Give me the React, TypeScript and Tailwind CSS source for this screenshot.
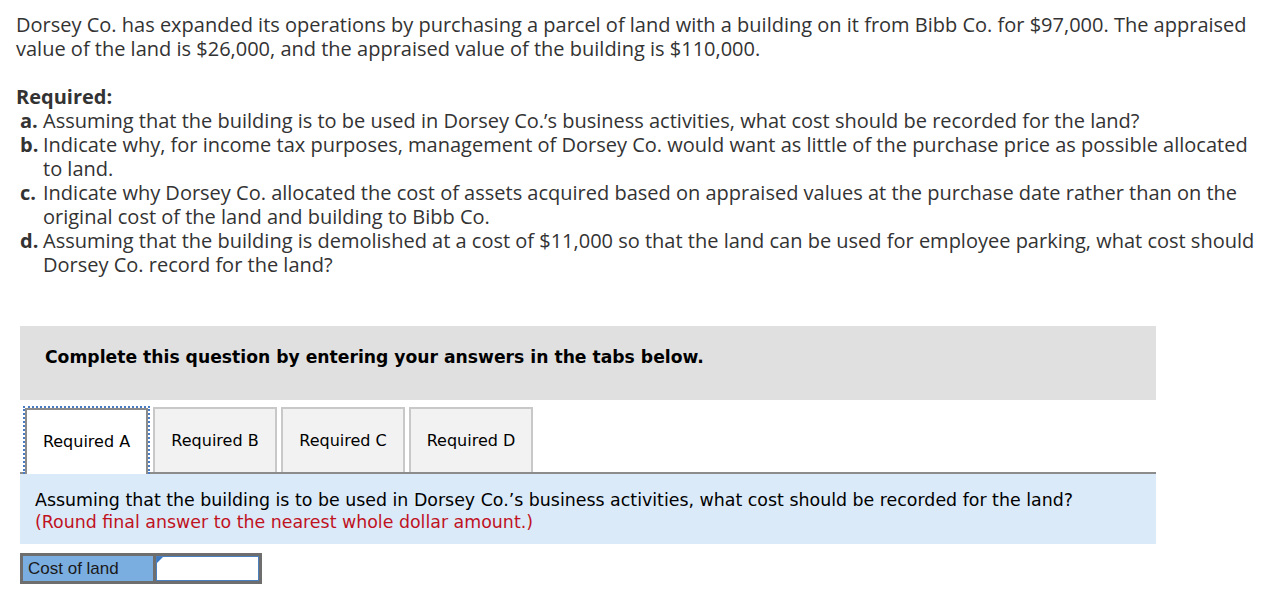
import React from 'react';

const items = [
  {
    key: 'a.',
    text: 'Assuming that the building is to be used in Dorsey Co.’s business activities, what cost should be recorded for the land?',
  },
  {
    key: 'b.',
    text: 'Indicate why, for income tax purposes, management of Dorsey Co. would want as little of the purchase price as possible allocated to land.',
  },
  {
    key: 'c.',
    text: 'Indicate why Dorsey Co. allocated the cost of assets acquired based on appraised values at the purchase date rather than on the original cost of the land and building to Bibb Co.',
  },
  {
    key: 'd.',
    text: 'Assuming that the building is demolished at a cost of $11,000 so that the land can be used for employee parking, what cost should Dorsey Co. record for the land?',
  },
];

const tabs = ['Required A', 'Required B', 'Required C', 'Required D'];

export default function App() {
  return (
    <div className="min-h-screen bg-white">
      <div
        className="pl-4 pt-[13px] w-[1262px] text-[20px] leading-6 text-[#333]"
        style={{ fontFamily: '"Open Sans", Lato, sans-serif' }}
      >
        <p>
          Dorsey Co. has expanded its operations by purchasing a parcel of land with a building on it from Bibb Co. for
          $97,000. The appraised value of the land is $26,000, and the appraised value of the building is $110,000.
        </p>
        <p className="mt-6 font-bold">Required:</p>
        <div className="pl-1">
          {items.map((it) => (
            <div key={it.key} className="flex">
              <span className="w-[23px] shrink-0 font-bold">{it.key}</span>
              <span>{it.text}</span>
            </div>
          ))}
        </div>
      </div>

      <div className="ml-5 w-[1136px] mt-[49px]" style={{ fontFamily: '"DejaVu Sans", Verdana, sans-serif' }}>
        <div className="h-[74px] bg-[#e0e0e0] pl-[25px] pt-[20px]">
          <p className="text-[17.2px] leading-[22px] font-bold text-black">
            Complete this question by entering your answers in the tabs below.
          </p>
        </div>

        <div className="mt-[6px] flex items-end border-b-2 border-[#8c8c8c]">
          <div className="ml-[3px] -mb-[2px] border-2 border-b-0 border-dotted border-[#4a7cc4] bg-white">
            <div className="h-[66px] w-[123px] bg-white border-2 border-b-0 border-[#8c8c8c] flex items-center justify-center text-[16px] text-black">
              Required A
            </div>
          </div>
          <div className="flex gap-[4px] ml-[3px]">
            {tabs.slice(1).map((t) => (
              <div
                key={t}
                className="h-[65px] w-[124px] bg-[#f2f2f2] border-2 border-b-0 border-[#c8c8c8] flex items-center justify-center text-[16px] text-black"
              >
                {t}
              </div>
            ))}
          </div>
        </div>

        <div className="bg-[#dbeaf8] h-[70px] pl-[15px] pt-[15px] text-[17.4px] leading-[22px]">
          <p className="text-black">
            Assuming that the building is to be used in Dorsey Co.’s business activities, what cost should be recorded for the land?
          </p>
          <p className="text-[#c0121f]">(Round final answer to the nearest whole dollar amount.)</p>
        </div>

        <div className="mt-[9px] flex w-[242px] h-[31px] border-[3px] border-[#6e6e6e] bg-[#6e6e6e]">
          <div
            className="w-[130px] bg-[#7aade0] flex items-center pl-[5px] text-[17px] text-[#1a1a1a]"
            style={{ fontFamily: '"Liberation Sans", Arial, sans-serif' }}
          >
            Cost of land
          </div>
          <div className="relative flex-1 ml-[3px] bg-white border border-[#4a7fc0]">
            <div className="absolute left-0 top-0 w-0 h-0 border-t-[6px] border-t-[#3b78c4] border-r-[6px] border-r-transparent" />
          </div>
        </div>
      </div>
    </div>
  );
}
